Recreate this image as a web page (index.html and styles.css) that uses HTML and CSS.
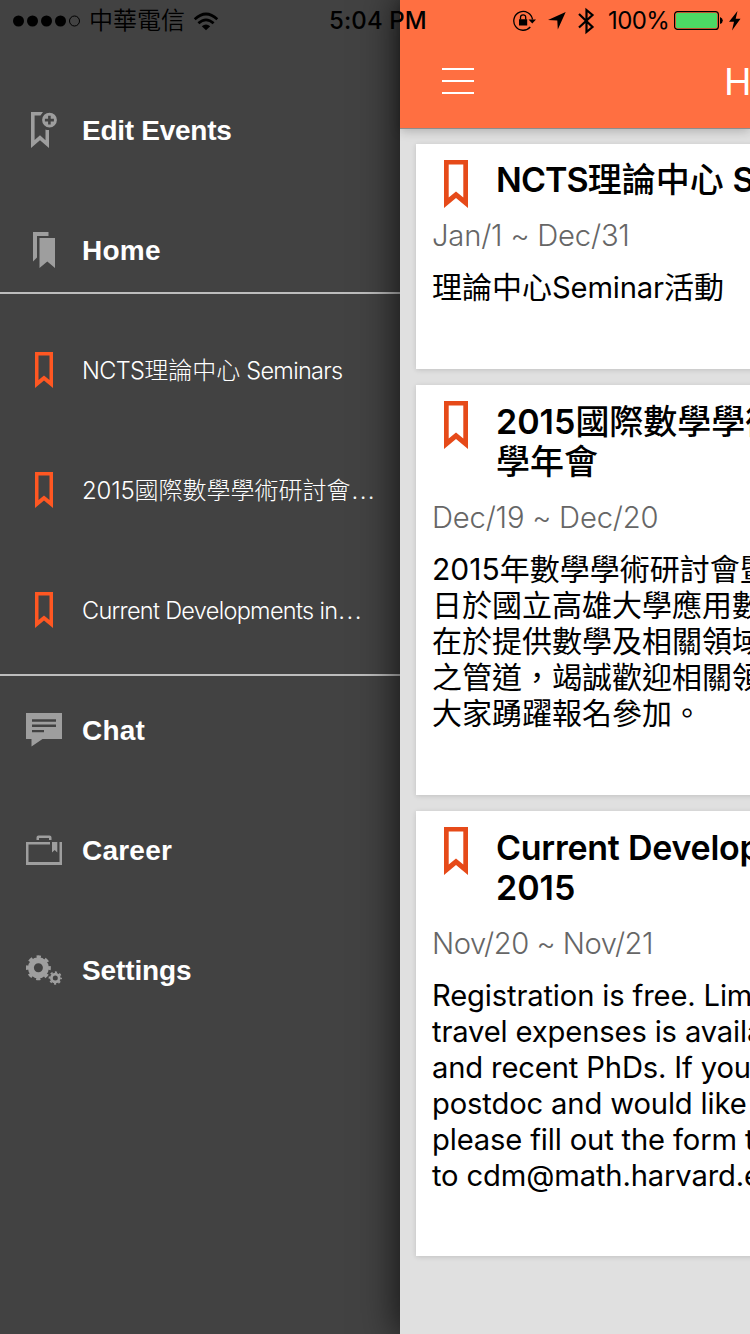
FILE: index.html
```
<!DOCTYPE html>
<html lang="zh-Hant">
<head>
<meta charset="utf-8">
<title>Home</title>
<link rel="stylesheet" href="styles.css">
</head>
<body>
<svg class="defs" width="0" height="0">
  <symbol id="bookmark" viewBox="0 0 18 36"><path fill-rule="evenodd" d="M0 0H18V36L9 28.5 0 36ZM3.500 3.500V28L9 23.500 14.500 28V3.500Z"/></symbol>
  <symbol id="bookmark-lg" viewBox="0 0 24 48"><path fill-rule="evenodd" d="M0 0H24V48L12 38 0 48ZM4.700 4.500V37.600L12 31.500 19.300 37.600V4.500Z"/></symbol>
</svg>
<div class="screen">
  <nav class="drawer">
    <div class="group group-top">
      <a class="row">
        <svg class="icon" viewBox="0 0 36 36"><path d="M5 0H17L14.500 3.500H8.600V28L14 23.200 19.500 28.200V17.500Q21.300 18.200 23 18V36L14 28.300 5 36Z"/><path fill-rule="evenodd" d="M23.500.7a7.400 7.400 0 1 0 0 14.800a7.400 7.400 0 1 0 0-14.800ZM22.100 3.700H24.700V6.800H27.900V9.400H24.700V12.600H22.100V9.400H18.900V6.800H22.100Z"/></svg>
        <span class="label tight">Edit Events</span>
      </a>
      <a class="row">
        <svg class="icon" viewBox="0 0 36 36"><path d="M7 0H22.500V4H11V25.500L7 29.500Z"/><path d="M13.500 6H29V36L21.300 29.500 13.500 36Z"/></svg>
        <span class="label wide">Home</span>
      </a>
    </div>
    <div class="group group-events">
      <a class="row"><svg class="mark"><use href="#bookmark"/></svg><span class="sub"><span class="abbr">NCTS</span>理論中心<span class="word"> Seminars</span></span></a>
      <a class="row"><svg class="mark"><use href="#bookmark"/></svg><span class="sub"><span class="num">2015</span>國際數學學術研討會<span class="dots">...</span></span></a>
      <a class="row"><svg class="mark"><use href="#bookmark"/></svg><span class="sub"><span class="word">Current Developments in</span><span class="dots">...</span></span></a>
    </div>
    <div class="group group-bottom">
      <a class="row">
        <svg class="icon" viewBox="0 0 36 36"><path fill-rule="evenodd" d="M0 1H36V27H16.500L5.500 34.500V27H0ZM6 7.300V9.700H30V7.300ZM6 12.500V15H30V12.500ZM6 18V20.200H18V18Z"/></svg>
        <span class="label wide">Chat</span>
      </a>
      <a class="row">
        <svg class="icon" viewBox="0 0 36 36"><path d="M10.500 8V5.500Q10.500 3.500 12.500 3.500H23.500Q25.500 3.500 25.500 5.500V8H23V6H13V8ZM0 10H24V12.500H2.500V30H33.500V10H36V33H0ZM26 10H31.300V20.500L28.700 18 26 20.500Z"/></svg>
        <span class="label wide">Career</span>
      </a>
      <a class="row">
        <svg class="icon" viewBox="0 0 36 36"><g fill="none" stroke="#9e9e9e"><circle cx="12.400" cy="15.800" r="7.500" stroke-width="6"/><circle cx="12.400" cy="15.800" r="11" stroke-width="2.900" stroke-dasharray="4.300 4.340" stroke-dashoffset="2.150"/><circle cx="29.300" cy="26" r="3.900" stroke-width="2.800"/><circle cx="29.300" cy="26" r="5.800" stroke-width="1.700" stroke-dasharray="2.200 2.355" stroke-dashoffset="1.100"/></g></svg>
        <span class="label">Settings</span>
      </a>
    </div>
  </nav>
  <main class="panel">
    <header class="bar">
      <div class="burger"><i></i><i></i><i></i></div>
      <h1 class="title">Home</h1>
    </header>
    <div class="cards">
      <article class="card c1">
        <div class="head"><svg class="mark-lg"><use href="#bookmark-lg"/></svg><h2 class="name"><span class="name-abbr">NCTS</span><span class="han">理論中心</span> Seminars</h2></div>
        <p class="date">Jan/1 ~ Dec/31</p>
        <p class="text">理論中心<span class="en">Seminar</span>活動</p>
      </article>
      <article class="card c2">
        <div class="head"><svg class="mark-lg"><use href="#bookmark-lg"/></svg><h2 class="name">2015<span class="han">國際數學學術研討會</span><br><span class="han">學年會</span></h2></div>
        <p class="date">Dec/19 ~ Dec/20</p>
        <p class="text">2015年數學學術研討會暨<br>日於國立高雄大學應用數學<br>在於提供數學及相關領域<br>之管道，竭誠歡迎相關領域<br>大家踴躍報名參加。</p>
      </article>
      <article class="card c3">
        <div class="head"><svg class="mark-lg"><use href="#bookmark-lg"/></svg><h2 class="name"><span class="name-en">Current Developments</span><br>2015</h2></div>
        <p class="date narrow">Nov/20 ~ Nov/21</p>
        <p class="text en">Registration is free. Limited<br>travel expenses is available<br>and recent PhDs. If you are<br>postdoc and would like to<br>please fill out the form to<br>to cdm@math.harvard.edu</p>
      </article>
    </div>
  </main>
  <div class="status">
    <div class="carrier">
      <svg width="68" height="12" viewBox="0 0 68 12"><circle cx="5.500" cy="6" r="5.500"/><circle cx="19.500" cy="6" r="5.500"/><circle cx="33.500" cy="6" r="5.500"/><circle cx="47.500" cy="6" r="5.500"/><circle cx="61.500" cy="6" r="5" fill="none" stroke="#000"/></svg>
      <span class="operator">中華電信</span>
      <svg class="wifi" width="26" height="20" viewBox="0 0 26 20"><path d="M8.800 15.200Q13 11.800 17.200 15.200L13 19.200Z"/><g fill="none" stroke="#000" stroke-width="2.700"><path d="M5.400 12.200Q13 5.400 20.600 12.200"/><path d="M1.700 8.200Q13-2.200 24.300 8.200"/></g></svg>
    </div>
    <span class="clock">5:04 PM</span>
    <div class="indicators">
      <svg width="24" height="22" viewBox="0 0 24 22"><path fill="none" stroke="#000" stroke-width="1.300" d="M17.300 17A9.400 9.400 0 1 1 19.500 9.500"/><path d="M15.500 9.500H23L19.300 13.500ZM6 9.300H14.200V15.600H6Z"/><path fill="none" stroke="#000" stroke-width="1.300" d="M7.500 9.500V7.200Q7.500 4.800 10.100 4.800T12.700 7.200V9.500"/></svg>
      <svg class="arrow" width="18" height="18" viewBox="0 0 18 18"><path d="M17.700 0 9.800 17.500 9.300 8.500 0 8Z"/></svg>
      <svg class="bt" width="17" height="28" viewBox="0 0 17 28"><path fill="none" stroke="#000" stroke-width="2.200" d="M1 7 14.500 20 8.500 25V3L14.500 8 1 20.500"/></svg>
      <span class="pct">100%</span>
      <svg width="49" height="20" viewBox="0 0 49 20"><rect x=".6" y=".6" width="43.800" height="17.800" rx="3" fill="none" stroke="#000" stroke-width="1.200"/><rect x="2" y="2" width="41" height="15" rx="1.500" fill="#4cd964"/><path d="M46 6Q48.800 7 48.800 9.500T46 13Z"/></svg>
      <svg class="bolt" width="12" height="20" viewBox="0 0 12 20"><path d="M8.500 0 0 10.800H5L3 19.500 11.500 7.800H6.700Z"/></svg>
    </div>
  </div>
</div>
</body>
</html>
```
FILE: styles.css
```
* { box-sizing: border-box; margin: 0; padding: 0; }
body { width: 750px; height: 1334px; overflow: hidden; font-family: Inter, "Noto Sans CJK TC", sans-serif; }
svg { display: block; flex: none; }
.defs { position: absolute; }
.screen { position: relative; display: grid; grid-template-columns: 400px 350px; height: 1334px; overflow: hidden; background: #424242; }

/* Drawer */
.group { display: flex; flex-direction: column; gap: 60px; }
.group-top { padding: 100px 0 12px; border-bottom: 2px solid #bdbdbd; }
.group-events { padding: 46px 0 34px; border-bottom: 2px solid #bdbdbd; }
.group-bottom { padding-top: 24px; }
.row { display: flex; align-items: center; height: 60px; padding-left: 26px; gap: 20px; white-space: nowrap; }
.icon { width: 36px; height: 36px; fill: #9e9e9e; }
.mark { width: 18px; height: 36px; margin: 0 9px; fill: #ff5722; }
.label { padding-top: 2px; font: bold 28px/40px "Liberation Sans", sans-serif; letter-spacing: -.12px; color: #fff; }
.label.tight { letter-spacing: -.27px; }
.label.wide { letter-spacing: .22px; }
.sub { padding-top: 2px; font-weight: 300; font-size: 24px; line-height: 36px; color: #fff; }
.word { font-size: 23.500px; letter-spacing: -.7px; }
.abbr { font-size: 23.500px; letter-spacing: -.6px; }
.num { letter-spacing: -.2px; }
.dots { margin-left: 1px; letter-spacing: 1.400px; }

/* Sliding panel */
.panel { position: relative; height: 1334px; background: #e0e0e0; box-shadow: 0 0 36px 2px rgba(0, 0, 0, .72); }
.bar { position: relative; display: flex; height: 129px; padding: 68px 0 0 42px; background: #ff6f41; border-bottom: 1px solid #8d8d8d; box-shadow: 0 2px 10px rgba(0, 0, 0, .22); }
.burger { display: flex; flex-direction: column; gap: 10px; width: 32px; flex: none; }
.burger i { height: 2px; background: #fff; }
.title { margin: -6px 0 0 250px; font-weight: 400; font-size: 37px; line-height: 40px; color: #fff; }
.cards { display: flex; flex-direction: column; gap: 16px; padding: 15px 0 0 16px; }
.card { width: 718px; padding: 16px; background: #fff; box-shadow: 0 1px 5px rgba(0, 0, 0, .14); white-space: nowrap; }
.c1 { height: 225px; }
.c2 { height: 410px; }
.c3 { height: 445px; }
.head { display: flex; align-items: flex-start; padding-left: 12px; gap: 28px; margin-bottom: 18px; }
.mark-lg { width: 24px; height: 48px; margin-bottom: -8px; fill: #e64a19; }
.name { font-weight: 600; font-size: 34px; line-height: 40px; color: #000; }
.c2 .name, .c3 .name { padding-top: 1px; }
.name-abbr { letter-spacing: -.9px; }
.name-en { letter-spacing: -.25px; }
.han { font-weight: 500; }
.date { font-weight: 300; font-size: 29.200px; line-height: 36px; letter-spacing: -.2px; color: #666; margin-bottom: 15px; }
.date.narrow { letter-spacing: -.47px; }
.text { font-size: 30px; line-height: 36px; color: #000; }
.en { font-size: 29.200px; letter-spacing: -.15px; }
.text.en { padding-top: 1px; }

/* Status bar */
.status { position: absolute; inset: 0 0 auto; display: grid; grid-template-columns: 329px 184px 1fr; align-items: center; height: 41px; color: #000; }
.carrier, .indicators { display: flex; align-items: center; }
.carrier { padding-left: 13px; }
.operator { margin-left: 8px; font-size: 24px; line-height: 30px; font-weight: 350; }
.wifi { margin-left: 8px; }
.clock { font-weight: 500; font-size: 24px; line-height: 30px; letter-spacing: .1px; }
.arrow { margin-left: 11px; }
.bt { margin-left: 12px; }
.pct { width: 66px; margin-left: 13px; font-size: 24px; line-height: 30px; letter-spacing: -.6px; }
.bolt { margin-left: 6px; }
```
